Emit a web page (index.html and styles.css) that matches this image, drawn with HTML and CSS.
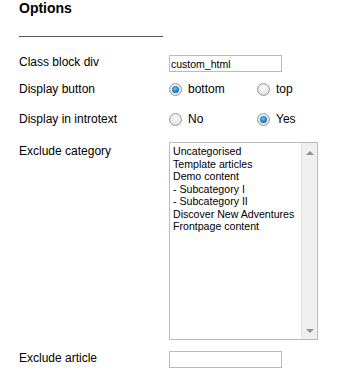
FILE: index.html
```html
<!DOCTYPE html>
<html lang="en">
<head>
  <meta charset="UTF-8" />
  <title>Options</title>
  <link rel="stylesheet" href="styles.css">
</head>
<body>
  <div class="options-panel">
    <h3 class="options-title">Options</h3>
    <div class="options-rule"></div>

    <div class="opt-row row-class">
      <label class="opt-label" for="classDiv">Class block div</label>
      <input id="classDiv" class="opt-text" type="text" value="custom_html">
    </div>

    <div class="opt-row row-button">
      <span class="opt-label">Display button</span>
      <div class="opt-radios">
        <label class="opt-radio"><input type="radio" name="btn" checked><span>bottom</span></label>
        <label class="opt-radio"><input type="radio" name="btn"><span>top</span></label>
      </div>
    </div>

    <div class="opt-row row-intro">
      <span class="opt-label">Display in introtext</span>
      <div class="opt-radios">
        <label class="opt-radio"><input type="radio" name="intro"><span>No</span></label>
        <label class="opt-radio"><input type="radio" name="intro" checked><span>Yes</span></label>
      </div>
    </div>

    <div class="opt-row row-category">
      <span class="opt-label">Exclude category</span>
      <div class="opt-list">
        <ul class="opt-items">
          <li>Uncategorised</li>
          <li>Template articles</li>
          <li>Demo content</li>
          <li>- Subcategory I</li>
          <li>- Subcategory II</li>
          <li>Discover New Adventures</li>
          <li>Frontpage content</li>
        </ul>
        <div class="opt-scroll">
          <span class="arrow-up"></span>
          <span class="arrow-down"></span>
        </div>
      </div>
    </div>

    <div class="opt-row row-article">
      <label class="opt-label" for="excludeArticle">Exclude article</label>
      <input id="excludeArticle" class="opt-text" type="text" value="">
    </div>
  </div>
</body>
</html>
```

FILE: styles.css
```css
body {
  margin: 0;
  background: #fff;
  font-family: 'Liberation Sans', Arial, sans-serif;
  color: #000;
}
.options-panel {
  padding: 0 0 0 19px;
}
.options-title {
  margin: 0;
  font-size: 14px;
  line-height: 16px;
  font-weight: bold;
}
.options-rule {
  width: 144px;
  height: 1px;
  background: #555;
  margin-top: 20px;
}
.opt-row {
  display: flex;
  align-items: center;
}
.opt-label {
  width: 150px;
  flex: none;
  font-size: 12px;
  line-height: 14px;
}
.row-class { margin-top: 18px; height: 17px; }
.row-class .opt-label { margin-bottom: 3px; }
.row-button { margin-top: 8px; height: 18px; }
.row-intro { margin-top: 12px; height: 18px; }
.row-category { margin-top: 14px; align-items: flex-start; }
.row-category .opt-label { padding-top: 2px; }
.row-article { margin-top: 11px; height: 17px; }
.row-article .opt-label { margin-bottom: 4px; }

.opt-text {
  box-sizing: border-box;
  width: 113px;
  height: 17px;
  margin: 0;
  padding: 0 1px;
  border: 1px solid #bbb;
  font-family: 'Liberation Sans', Arial, sans-serif;
  font-size: 10.5px;
  color: #000;
  outline: none;
}
.opt-radios {
  display: flex;
}
.opt-radio {
  display: flex;
  align-items: center;
  width: 88px;
  font-size: 12px;
}
.opt-radio input {
  appearance: none;
  -webkit-appearance: none;
  box-sizing: border-box;
  width: 13px;
  height: 13px;
  margin: 0 6px 0 0;
  border: 1px solid #9a9a9a;
  border-radius: 50%;
  background: radial-gradient(circle at 50% 40%, #fbfbfb 0%, #e6e6e6 60%, #d2d2d2 100%);
  position: relative;
}
.opt-radio input:checked::after {
  content: '';
  position: absolute;
  left: 2px;
  top: 2px;
  width: 7px;
  height: 7px;
  border-radius: 50%;
  background: radial-gradient(circle at 45% 40%, #6cc4f2 0%, #1c7fc4 55%, #0d4f86 100%);
}
.opt-list {
  box-sizing: border-box;
  width: 149px;
  height: 198px;
  border: 1px solid #bbb;
  display: flex;
}
.opt-items {
  flex: 1;
  list-style: none;
  margin: 0;
  padding: 2px 0 0 3px;
  font-size: 10.6px;
  line-height: 12.5px;
}
.opt-scroll {
  width: 15px;
  background: #efefef;
  border-left: 1px solid #e2e2e2;
  display: flex;
  flex-direction: column;
  justify-content: space-between;
  align-items: center;
  padding: 8px 0 6px;
}
.arrow-up {
  width: 0;
  height: 0;
  border-left: 4px solid transparent;
  border-right: 4px solid transparent;
  border-bottom: 4px solid #909090;
}
.arrow-down {
  width: 0;
  height: 0;
  border-left: 4px solid transparent;
  border-right: 4px solid transparent;
  border-top: 4px solid #909090;
}
```
